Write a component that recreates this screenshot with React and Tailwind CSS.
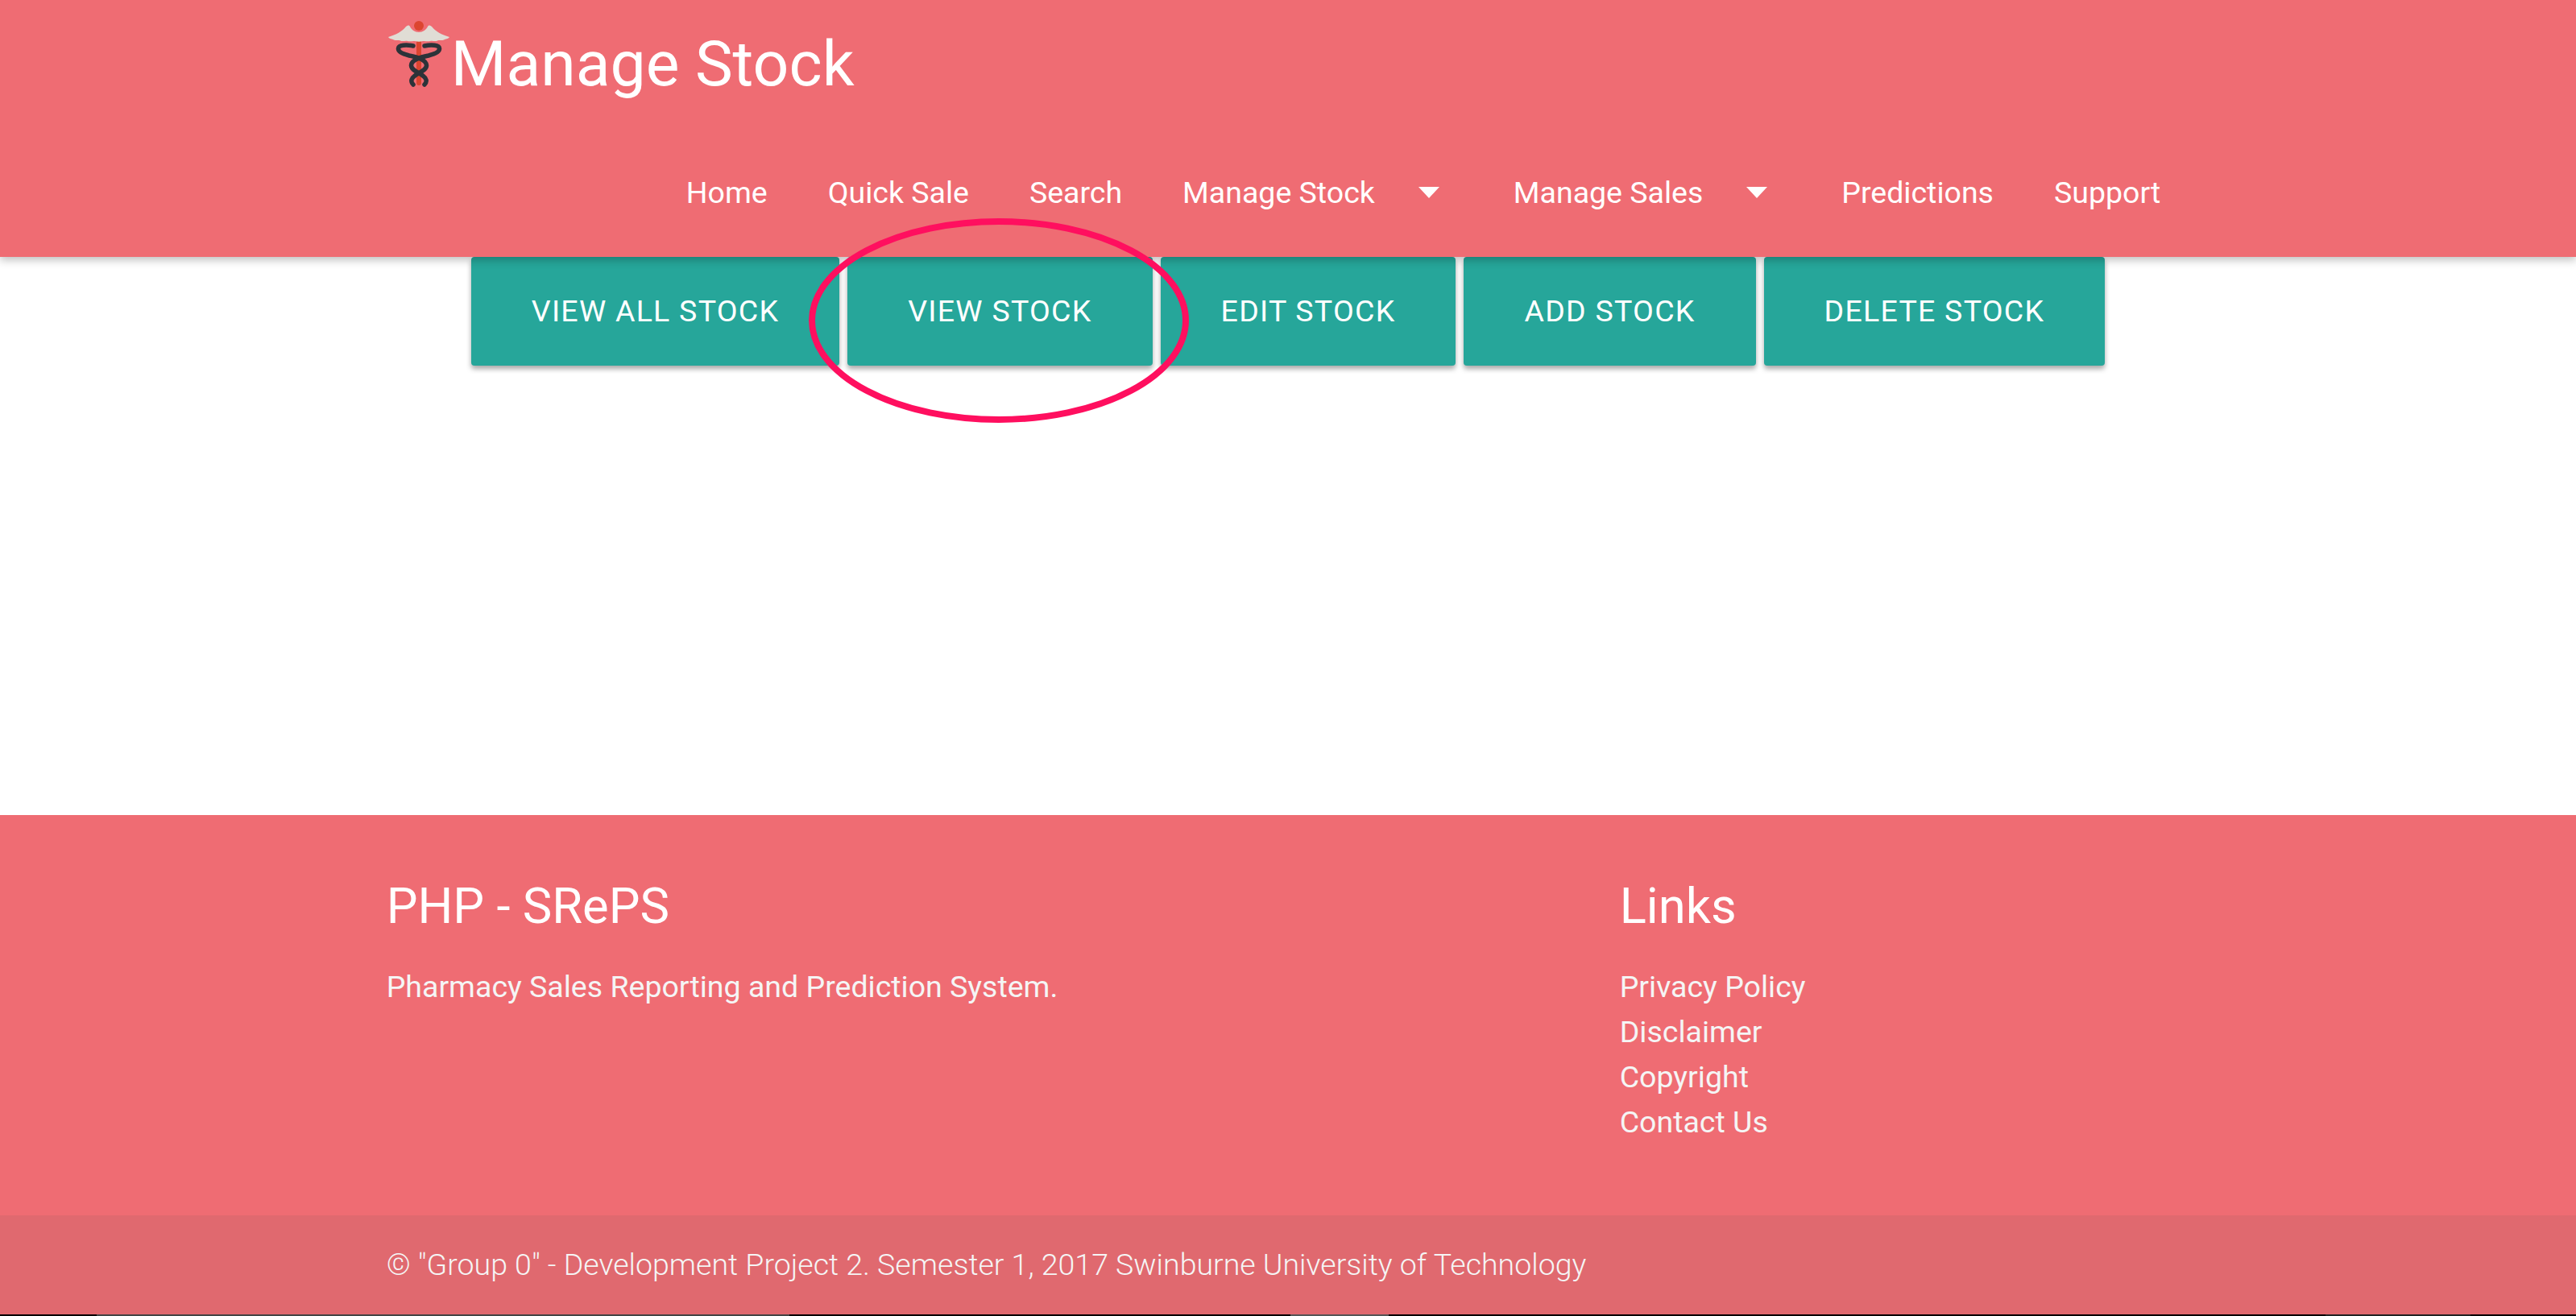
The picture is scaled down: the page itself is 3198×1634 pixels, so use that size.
const navLinks = [
  { label: 'Home' },
  { label: 'Quick Sale' },
  { label: 'Search' },
  { label: 'Manage Stock', caret: true },
  { label: 'Manage Sales', caret: true },
  { label: 'Predictions' },
  { label: 'Support' },
];

const stockButtons = ['View All Stock', 'View Stock', 'Edit Stock', 'Add Stock', 'Delete Stock'];

const footerLinks = ['Privacy Policy', 'Disclaimer', 'Copyright', 'Contact Us'];

function Logo() {
  return (
    <svg viewBox="0 0 100 90" className="w-[100px] h-[90px] shrink-0 -mr-[20px] mt-[20px] self-start">
      {/* staff */}
      <rect x="37" y="28" width="6" height="58" rx="3" fill="#dc4530" />
      {/* snakes */}
      <path
        d="M33 37 C24 35 15 36 14.5 40 C14 44 20 47 28 49 C38 51 49 54 49.5 61 C50 67 40 70 35 74 C31 77 29 81 33 85"
        fill="none" stroke="#2c3339" strokeWidth="5.5" strokeLinecap="round"
      />
      <path
        d="M47 37 C56 35 65 36 65.5 40 C66 44 60 47 52 49 C42 51 31 54 30.5 61 C30 67 40 70 45 74 C49 77 51 81 47 85"
        fill="none" stroke="#2c3339" strokeWidth="5.5" strokeLinecap="round"
      />
      {/* wings */}
      <path
        d="M2 26 C12 23 19 19 24 13 C26 11 28 11 29 13 C31 17 35 20 40 20 C45 20 49 17 51 13 C52 11 54 11 56 13 C61 19 68 23 78 26 C77 28 74 28 72 29 C69 31 66 29 63 30.5 C60 32 57 30 54 31 C51 32 48 30.5 45 31 C42 32 38 32 35 31 C32 30.5 29 32 26 31 C23 30 20 32 17 30.5 C14 29 11 31 8 29 C6 28 3 28 2 26 Z"
        fill="#e0ddd5"
      />
      <circle cx="40" cy="12" r="6" fill="#dc4530" />
    </svg>
  );
}

function Caret() {
  return (
    <svg viewBox="0 0 26 14" className="w-[26px] h-[14px] ml-[54px] mr-[17px]">
      <path d="M0 0 H26 L13 14 Z" fill="white" />
    </svg>
  );
}

export default function App() {
  return (
    <div className="relative h-[1634px] w-full overflow-hidden bg-white font-['Roboto',sans-serif] text-white">
      <nav className="relative h-[319px] bg-[#ef6c73] shadow-[0_4px_10px_rgba(0,0,0,0.25)]">
        <div className="w-[70%] mx-auto">
          <div className="h-[159px] flex items-start">
            <Logo />
            <span className="text-[78.7px] leading-[159px]">Manage Stock</span>
          </div>
          <ul className="h-[160px] flex justify-end items-center pr-[36px] gap-[75px] text-[37.5px]">
            {navLinks.map((link) => (
              <li key={link.label} className="flex items-center">
                {link.label}
                {link.caret && <Caret />}
              </li>
            ))}
          </ul>
        </div>
      </nav>

      <main className="h-[693px] flex justify-center items-start gap-[10px]">
        {stockButtons.map((label) => (
          <button
            key={label}
            className="h-[135px] px-[75px] bg-[#26a69a] rounded-[4px] uppercase text-[37.5px] tracking-[1.25px] shadow-[0_4px_6px_rgba(0,0,0,0.35)]"
          >
            {label}
          </button>
        ))}
      </main>

      <footer className="bg-[#ef6c73] h-[620px] flex flex-col">
        <div className="flex-1 w-[70%] mx-auto flex pt-[71px]">
          <div className="w-[1531px]">
            <h5 className="text-[61.5px] leading-[84px]">PHP - SRePS</h5>
            <p className="text-[37.5px] mt-[30px] text-[#f5f5f5]">Pharmacy Sales Reporting and Prediction System.</p>
          </div>
          <div>
            <h5 className="text-[61.5px] leading-[84px]">Links</h5>
            <ul className="mt-[30px] text-[37.5px] text-[#f5f5f5]">
              {footerLinks.map((link) => (
                <li key={link} className="leading-[56px]">{link}</li>
              ))}
            </ul>
          </div>
        </div>
        <div className="h-[123px] bg-[#e0696f] flex items-center">
          <div className="w-[70%] mx-auto text-[37.5px] font-light text-[#f5f5f5]">
            © "Group 0" - Development Project 2. Semester 1, 2017 Swinburne University of Technology
          </div>
        </div>
      </footer>

      {/* bit of the window behind, showing under the page */}
      <div className="h-[2px] bg-black flex">
        <div className="ml-[120px] w-[860px] bg-[#444444]" />
        <div className="ml-[622px] w-[122px] bg-[#555555]" />
        <div className="ml-[1163px] w-[180px] bg-[#222222]" />
      </div>

      {/* hand drawn annotation on top of the page */}
      <svg className="absolute left-[1000px] top-[267px] w-[480px] h-[262px]" viewBox="0 0 480 262">
        <ellipse cx="240" cy="131" rx="232" ry="123" fill="none" stroke="#ff0f5f" strokeWidth="8" />
      </svg>
    </div>
  );
}
